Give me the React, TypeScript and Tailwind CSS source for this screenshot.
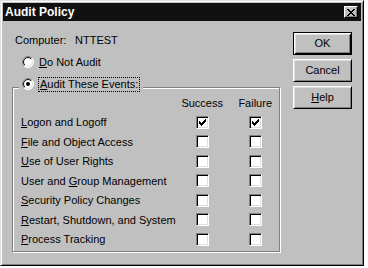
import { useId } from "react";

const events = [
  { pre: "", key: "L", post: "ogon and Logoff", success: true, failure: true },
  { pre: "", key: "F", post: "ile and Object Access", success: false, failure: false },
  { pre: "", key: "U", post: "se of User Rights", success: false, failure: false },
  { pre: "User and ", key: "G", post: "roup Management", success: false, failure: false },
  { pre: "", key: "S", post: "ecurity Policy Changes", success: false, failure: false },
  { pre: "", key: "R", post: "estart, Shutdown, and System", success: false, failure: false },
  { pre: "", key: "P", post: "rocess Tracking", success: false, failure: false },
];

function Radio({ checked }: { checked?: boolean }) {
  const id = useId().replace(/:/g, "");
  return (
    <svg width="12" height="12" viewBox="0 0 12 12" className="shrink-0">
      <defs>
        <linearGradient id={`o${id}`} x1="0" y1="0" x2="1" y2="1">
          <stop offset="0.5" stopColor="#808080" />
          <stop offset="0.5" stopColor="#ffffff" />
        </linearGradient>
        <linearGradient id={`i${id}`} x1="0" y1="0" x2="1" y2="1">
          <stop offset="0.5" stopColor="#000000" />
          <stop offset="0.5" stopColor="#dfdfdf" />
        </linearGradient>
      </defs>
      <circle cx="6" cy="6" r="5.5" fill="#fff" stroke={`url(#o${id})`} strokeWidth="1" />
      <circle cx="6" cy="6" r="4.5" fill="none" stroke={`url(#i${id})`} strokeWidth="1" />
      {checked && <circle cx="6" cy="6" r="2" fill="#000" />}
    </svg>
  );
}

function Checkbox({ checked }: { checked?: boolean }) {
  return (
    <div className="w-[13px] h-[13px] bg-white border border-t-[#808080] border-l-[#808080] border-r-white border-b-white shadow-[inset_1px_1px_0_#000,inset_-1px_-1px_0_#dfdfdf] flex items-center justify-center">
      {checked && (
        <svg width="7" height="7" viewBox="0 0 7 7" shapeRendering="crispEdges">
          <rect x="0" y="2" width="1" height="3" fill="#000" />
          <rect x="1" y="3" width="1" height="3" fill="#000" />
          <rect x="2" y="4" width="1" height="3" fill="#000" />
          <rect x="3" y="3" width="1" height="3" fill="#000" />
          <rect x="4" y="2" width="1" height="3" fill="#000" />
          <rect x="5" y="1" width="1" height="3" fill="#000" />
          <rect x="6" y="0" width="1" height="3" fill="#000" />
        </svg>
      )}
    </div>
  );
}

function Button({ children, isDefault }: { children: React.ReactNode; isDefault?: boolean }) {
  const bevel = isDefault
    ? "border border-black shadow-[inset_1px_1px_0_#fff,inset_-1px_-1px_0_#000,inset_2px_2px_0_#dfdfdf,inset_-2px_-2px_0_#808080]"
    : "border border-t-white border-l-white border-r-black border-b-black shadow-[inset_1px_1px_0_#dfdfdf,inset_-1px_-1px_0_#808080]";
  return (
    <button className={`w-[59px] h-[23px] bg-[#c0c0c0] flex items-center justify-center leading-none ${bevel}`}>
      {children}
    </button>
  );
}

export default function App() {
  return (
    <div className="w-[368px] h-[268px] bg-white text-[11px] text-black font-['Liberation_Sans',Arial,sans-serif]">
      <div className="w-[364px] h-[266px] bg-[#c0c0c0] p-[2px] flex flex-col border border-t-[#dfdfdf] border-l-[#dfdfdf] border-r-black border-b-black shadow-[inset_1px_1px_0_#fff,inset_-1px_-1px_0_#808080]">
        {/* Title bar */}
        <div className="h-[18px] bg-[#111] flex items-center justify-between pl-[2px]">
          <span className="text-white font-bold text-[12px] leading-none">Audit Policy</span>
          <div className="w-[14px] h-[12px] mr-[3px] bg-[#c0c0c0] flex items-center justify-center border border-t-white border-l-white border-r-black border-b-black shadow-[inset_-1px_-1px_0_#808080]">
            <svg width="8" height="7" viewBox="0 0 8 7" shapeRendering="crispEdges">
              <rect x="0" y="0" width="2" height="1" fill="#000" />
              <rect x="6" y="0" width="2" height="1" fill="#000" />
              <rect x="1" y="1" width="2" height="1" fill="#000" />
              <rect x="5" y="1" width="2" height="1" fill="#000" />
              <rect x="2" y="2" width="4" height="1" fill="#000" />
              <rect x="3" y="3" width="2" height="1" fill="#000" />
              <rect x="2" y="4" width="4" height="1" fill="#000" />
              <rect x="1" y="5" width="2" height="1" fill="#000" />
              <rect x="5" y="5" width="2" height="1" fill="#000" />
              <rect x="0" y="6" width="2" height="1" fill="#000" />
              <rect x="6" y="6" width="2" height="1" fill="#000" />
            </svg>
          </div>
        </div>

        {/* Body */}
        <div className="flex flex-1">
          <div className="flex-1 flex flex-col">
            <div className="mt-[13px] h-[13px] leading-[13px] pl-[12px] flex">
              <span className="w-[60px]">Computer:</span>
              <span>NTTEST</span>
            </div>
            <div className="mt-[9px] h-[12px] pl-[19px] flex items-center gap-[5px] leading-none">
              <Radio />
              <span>
                <u>D</u>o Not Audit
              </span>
            </div>

            <div className="relative mt-[19px] ml-[9px] w-[268px] h-[165px] border border-[#808080] shadow-[inset_1px_1px_0_#fff,1px_1px_0_#fff]">
              <div className="absolute left-[6px] top-[-12px] h-[16px] px-[3px] bg-[#c0c0c0] flex items-center gap-[4px] leading-none">
                <Radio checked />
                <span className="border border-dotted border-black px-[1px] py-[1px]">
                  <u>A</u>udit These Events:
                </span>
              </div>

              <div className="pt-[5px] grid grid-cols-[1fr_53px_53px] auto-rows-[19.5px] items-center">
                <div />
                <div className="text-center">Success</div>
                <div className="text-center">Failure</div>
                {events.map((e) => (
                  <div key={e.key} className="contents">
                    <div className="pl-[8px] whitespace-nowrap">
                      {e.pre}
                      <u>{e.key}</u>
                      {e.post}
                    </div>
                    <div className="flex justify-center">
                      <Checkbox checked={e.success} />
                    </div>
                    <div className="flex justify-center">
                      <Checkbox checked={e.failure} />
                    </div>
                  </div>
                ))}
              </div>
            </div>
          </div>

          <div className="w-[59px] mr-[9px] pt-[11px] flex flex-col gap-[4px]">
            <Button isDefault>OK</Button>
            <Button>Cancel</Button>
            <Button>
              <span>
                <u>H</u>elp
              </span>
            </Button>
          </div>
        </div>
      </div>
    </div>
  );
}
